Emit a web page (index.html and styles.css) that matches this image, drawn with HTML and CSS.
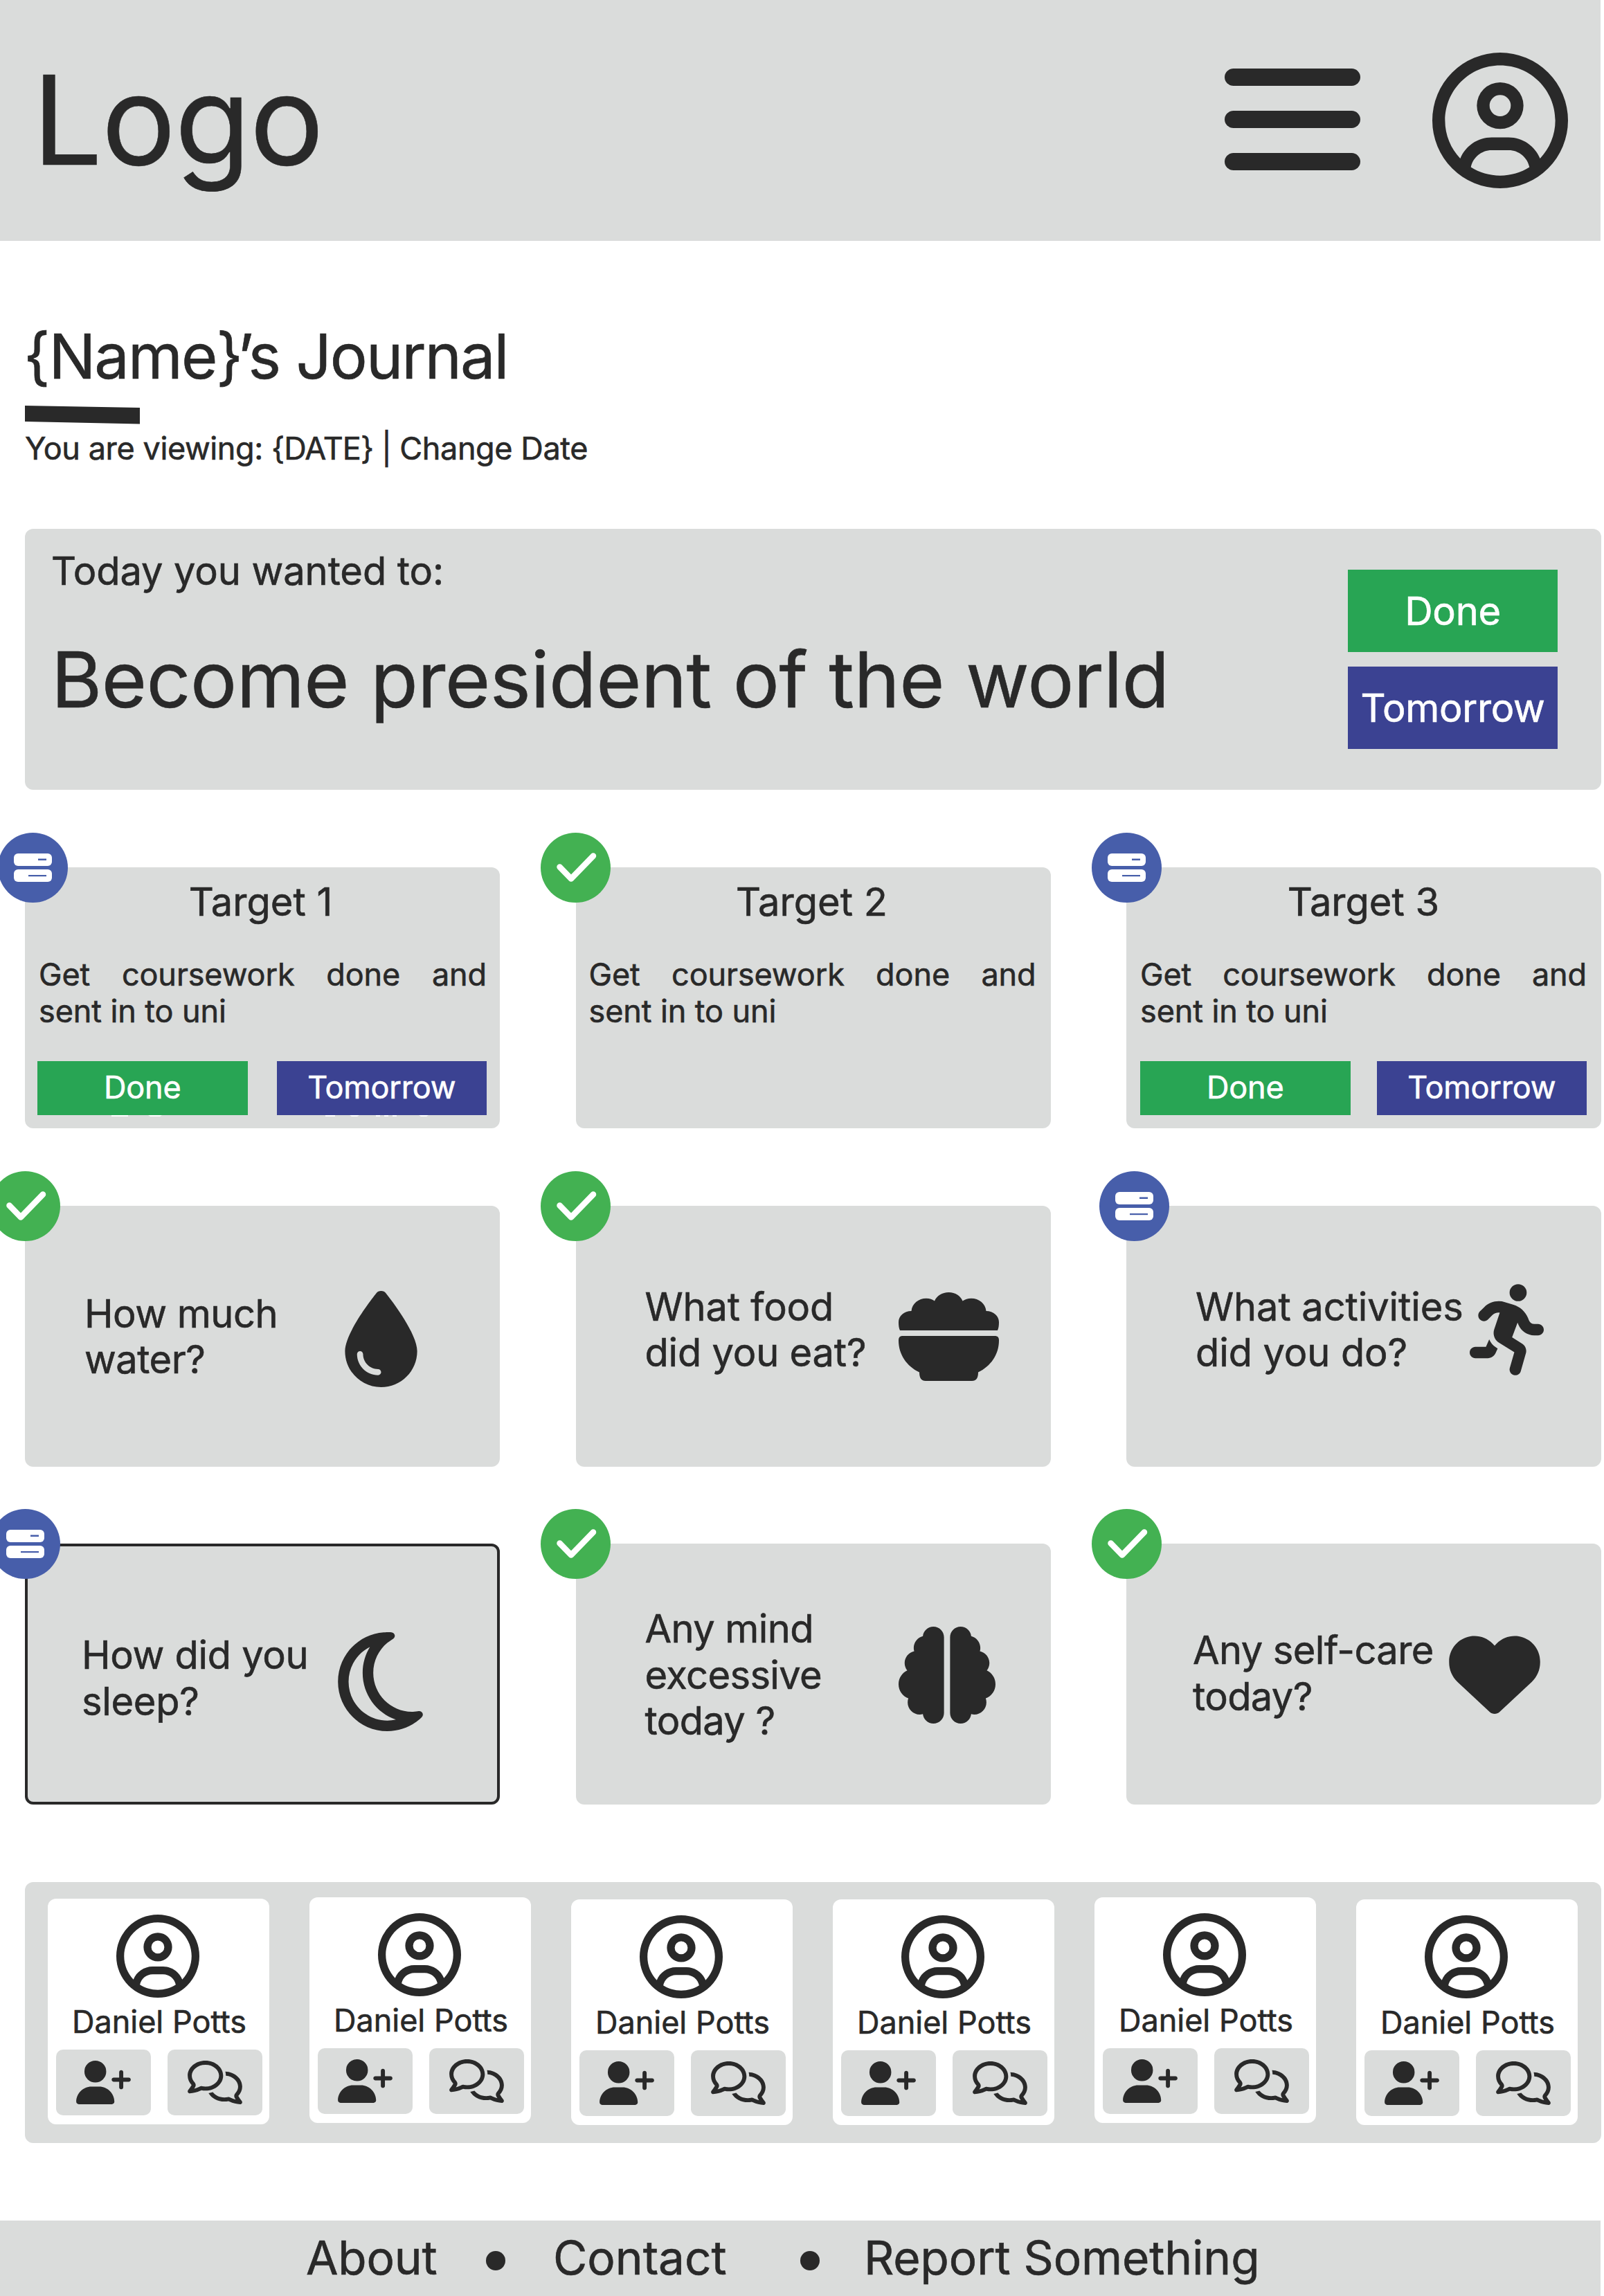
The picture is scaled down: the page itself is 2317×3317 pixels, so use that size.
FILE: index.html
```html
<!DOCTYPE html>
<html lang="en">
<head>
<meta charset="utf-8">
<title>Journal</title>
<link rel="stylesheet" href="styles.css">
</head>
<body>
<svg class="sprite" aria-hidden="true">
  <symbol id="i-user" viewBox="0 0 512 512"><path d="M406.5 399.6C387.4 352.9 341.5 320 288 320H224c-53.5 0-99.4 32.9-118.5 79.6C69.9 362.2 48 311.7 48 256C48 141.1 141.1 48 256 48s208 93.1 208 208c0 55.7-21.9 106.2-57.5 143.6zm-40.1 32.7C334.4 452.4 296.6 464 256 464s-78.4-11.6-110.5-31.7c7.3-36.7 39.7-64.3 78.5-64.3h64c38.8 0 71.2 27.6 78.5 64.3zM256 512A256 256 0 1 0 256 0a256 256 0 1 0 0 512zm0-272a40 40 0 1 1 0-80 40 40 0 1 1 0 80zm-88-40a88 88 0 1 0 176 0 88 88 0 1 0 -176 0z"/></symbol>
  <symbol id="i-later" viewBox="0 0 101 101"><rect x="23" y="30" width="55" height="18" rx="6" fill="#fff"/><rect x="23" y="53" width="55" height="18" rx="6" fill="#fff"/><rect x="58" y="37.5" width="12" height="2.5" fill="#475eaa"/><rect x="44" y="61" width="26" height="2.2" fill="#475eaa"/></symbol>
  <symbol id="i-check" viewBox="0 0 101 101"><path d="M27.5 49.5L44 66.5L76 33.5" fill="none" stroke="#fff" stroke-width="8.5" stroke-linecap="round" stroke-linejoin="round"/></symbol>
  <symbol id="i-drop" viewBox="0 0 384 512"><path d="M192 512C86 512 0 426 0 320C0 228.8 130.2 57.7 166.6 11.7C172.6 4.2 181.5 0 191.1 0h1.8c9.6 0 18.5 4.2 24.5 11.7C253.8 57.7 384 228.8 384 320c0 106-86 192-192 192zM96 336c0-8.8-7.2-16-16-16s-16 7.2-16 16c0 61.9 50.1 112 112 112c8.8 0 16-7.2 16-16s-7.2-16-16-16c-44.2 0-80-35.8-80-80z"/></symbol>
  <symbol id="i-bowl" viewBox="0 0 145 128"><path d="M2 55C0.500 52 0 48 0 43C0 34 8 27 18.500 27C19.500 16 29 8.700 40 8.700C45 8.700 49 10 52 12.500C55 5 63 0 72.500 0C82 0 89.500 5 92.500 12.500C96 10 100 8.700 105 8.700C116 8.700 125.500 16 126.500 27C137 27 145 34 145 43C145 48 144.500 52 143 55ZM6 63H139C143 63 145 65 145 69.500C145 90 133 107 115 115.500C115 124 112 128 106 128H39C33 128 30 124 30 115.500C12 107 0 90 0 69.500C0 65 2 63 6 63Z"/></symbol>
  <symbol id="i-run" viewBox="0 0 416 512"><path d="M320 48a48 48 0 1 0 -96 0 48 48 0 1 0 96 0zM125.700 175.500c9.900-9.900 23.400-15.500 37.500-15.500c1.900 0 3.800 .1 5.600 .3L137.600 254c-9.300 28 1.700 58.800 26.800 74.500l86.200 53.900-25.400 88.800c-4.900 17 5 34.700 22 39.600s34.700-5 39.600-22l28.700-100.400c5.900-20.600-2.600-42.600-20.700-53.900L238 299l30.900-82.400 5.100 12.300C289 264.700 323.900 288 362.700 288l21.300 0c17.700 0 32-14.300 32-32s-14.300-32-32-32l-21.300 0c-12.900 0-24.600-7.800-29.500-19.700l-6.300-15c-14.600-35.100-44.100-61.900-80.500-73.100l-48.700-15c-11.100-3.400-22.700-5.200-34.400-5.200c-31 0-60.800 12.300-82.700 34.300L57.400 153.400c-12.500 12.500-12.500 32.800 0 45.300s32.800 12.500 45.300 0l23.100-23.100zM91.200 352L32 352c-17.700 0-32 14.300-32 32s14.300 32 32 32l69.600 0c19 0 36.200-11.200 43.900-28.500L157 361.600l-9.500-6c-17.500-10.900-30.500-26.800-37.900-44.900L91.200 352z"/></symbol>
  <symbol id="i-moon" viewBox="0 32 384 448"><path d="M144.700 98.700c-21 34.100-33.100 74.300-33.100 117.300c0 98 62.800 181.400 150.400 211.700c-12.400 2.800-25.300 4.300-38.600 4.300C126.600 432 48 353.300 48 256c0-68.900 39.400-128.400 96.800-157.300zm62.100-66C91.100 41.200 0 137.900 0 256C0 379.700 100 480 223.500 480c47.800 0 92-15 128.400-40.600c1.900-1.300 3.700-2.700 5.500-4c4.800-3.600 9.400-7.400 13.900-11.400c2.700-2.400 5.300-4.800 7.900-7.300c5-4.900 6.300-12.500 3.100-18.700s-10.100-9.700-17-8.500c-3.700 .6-7.400 1.200-11.100 1.600c-5 .5-10.100 .9-15.300 1c-1.200 0-2.500 0-3.700 0l-.3 0c-96.800-.2-175.200-78.900-175.200-176c0-54.800 24.900-103.700 64.100-136c1-.9 2.100-1.700 3.200-2.600c4-3.200 8.200-6.200 12.500-9c3.100-2 6.300-4 9.600-5.800c6.100-3.500 9.200-10.500 7.700-17.300s-7.300-11.900-14.300-12.500c-3.600-.3-7.100-.5-10.700-.6c-2.700-.1-5.500-.1-8.200-.1c-3.300 0-6.500 .1-9.800 .2c-2.300 .1-4.600 .2-6.900 .4z"/></symbol>
  <symbol id="i-brain" viewBox="0 0 512 512"><path d="M184 0c30.900 0 56 25.100 56 56V456c0 30.900-25.100 56-56 56c-28.900 0-52.700-21.900-55.700-50.100c-5.200 1.400-10.700 2.100-16.300 2.100c-35.300 0-64-28.700-64-64c0-7.400 1.300-14.600 3.600-21.200C21.400 367.400 0 338.200 0 304c0-31.900 18.700-59.500 45.800-72.300C37.100 220.800 32 207 32 192c0-30.700 21.600-56.300 50.400-62.600C80.800 123.900 80 118 80 112c0-29.900 20.600-55.100 48.300-62.100C131.300 21.900 155.100 0 184 0zM328 0c28.900 0 52.600 21.900 55.700 49.900c27.800 7 48.300 32.100 48.300 62.100c0 6-.8 11.900-2.400 17.400c28.800 6.200 50.400 31.900 50.400 62.600c0 15-5.100 28.800-13.800 39.700C493.300 244.500 512 272.100 512 304c0 34.200-21.400 63.400-51.600 74.800c2.300 6.600 3.600 13.800 3.600 21.200c0 35.300-28.700 64-64 64c-5.600 0-11.100-.7-16.300-2.100c-3 28.200-26.800 50.100-55.700 50.100c-30.900 0-56-25.100-56-56V56c0-30.900 25.100-56 56-56z"/></symbol>
  <symbol id="i-heart" viewBox="0 40 512 440"><path d="M47.600 300.400L228.300 469.100c7.500 7 17.400 10.900 27.700 10.900s20.200-3.900 27.700-10.900L464.400 300.400c30.400-28.300 47.600-68 47.600-109.500v-5.800c0-69.900-50.500-129.500-119.400-141C347 36.500 300.600 51.400 268 84L256 96 244 84c-32.600-32.600-79-47.500-124.600-39.900C50.500 55.600 0 115.200 0 185.100v5.800c0 41.500 17.200 81.200 47.600 109.500z"/></symbol>
  <symbol id="i-add" viewBox="0 0 640 512"><path d="M96 128a128 128 0 1 1 256 0A128 128 0 1 1 96 128zM0 482.300C0 383.800 79.800 304 178.300 304h91.400C368.200 304 448 383.800 448 482.300c0 16.400-13.300 29.700-29.700 29.700H29.700C13.300 512 0 498.700 0 482.300zM504 312V248H440c-13.300 0-24-10.700-24-24s10.700-24 24-24h64V136c0-13.300 10.700-24 24-24s24 10.700 24 24v64h64c13.300 0 24 10.700 24 24s-10.700 24-24 24H552v64c0 13.300-10.700 24-24 24s-24-10.700-24-24z"/></symbol>
  <symbol id="i-chat" viewBox="0 0 640 512"><path d="M88.200 309.100c9.800-18.300 6.800-40.800-7.500-55.800C59.400 230.900 48 204 48 176c0-63.500 63.800-128 160-128s160 64.500 160 128s-63.800 128-160 128c-13.100 0-25.800-1.300-37.800-3.600c-10.400-2-21.200-.6-30.700 4.200c-4.100 2.100-8.300 4.100-12.600 6c-16 7.200-32.900 13.500-49.900 18c2.800-4.600 5.400-9.100 7.900-13.600c1.100-1.900 2.200-3.900 3.200-5.900zM208 352c114.900 0 208-78.800 208-176S322.900 0 208 0S0 78.800 0 176c0 41.800 17.200 80.100 45.900 110.300c-.9 1.700-1.900 3.500-2.800 5.100c-10.300 18.400-22.300 36.500-36.600 52.100c-6.600 7-8.300 17.200-4.600 25.900C5.800 378.300 14.400 384 24 384c43 0 86.500-13.300 122.700-29.700c4.800-2.200 9.600-4.500 14.200-6.800c15.100 3 30.900 4.500 47.100 4.500zM432 480c16.200 0 31.900-1.600 47.100-4.500c4.600 2.300 9.400 4.600 14.200 6.800C529.500 498.700 573 512 616 512c9.600 0 18.200-5.700 22-14.500c3.800-8.800 2-19-4.600-25.900c-14.200-15.600-26.200-33.700-36.600-52.100c-.9-1.700-1.900-3.400-2.800-5.100C622.800 384.100 640 345.800 640 304c0-94.400-87.900-171.500-198.200-175.800c4.100 15.200 6.200 31.200 6.200 47.800l0 .6c87.200 6.700 144 67.500 144 127.400c0 28-11.400 54.900-32.700 77.200c-14.300 15-17.300 37.600-7.500 55.800c1.100 2 2.200 4 3.200 5.900c2.500 4.500 5.200 9 7.900 13.600c-17-4.500-33.900-10.700-49.900-18c-4.300-1.900-8.500-3.900-12.600-6c-9.500-4.800-20.300-6.200-30.700-4.200c-12.100 2.400-24.800 3.600-37.800 3.600c-61.700 0-110-26.500-136.800-62.300c-16 5.400-32.800 9.400-50 11.800C279 439.800 350 480 432 480z"/></symbol>
</svg>

<header class="header">
  <div class="logo">Logo</div>
  <div class="menu"><span></span><span></span><span></span></div>
  <svg class="account"><use href="#i-user"/></svg>
</header>

<main class="main">
  <h1 class="title">{Name<span class="tight">}’</span>s Journal</h1>
  <svg class="accent" viewBox="0 0 166 27"><path d="M0 0L166 3V26.500L0 23Z"/></svg>
  <p class="viewing">You are viewing: <span class="date">{DATE} |</span> Change Date</p>

  <section class="goal">
    <div class="goal-text">
      <p class="goal-label">Today you wanted to:</p>
      <p class="goal-name">Become president of the world</p>
    </div>
    <div class="goal-actions">
      <div class="btn btn-done">Done</div>
      <div class="btn btn-later">Tomorrow</div>
    </div>
  </section>

  <section class="grid">
    <article class="card target first">
      <svg class="badge later shift"><use href="#i-later"/></svg>
      <h2>Target 1</h2>
      <p><span class="full">Get coursework done and</span><span>sent in to uni</span></p>
      <div class="actions"><div class="btn btn-done">Done</div><div class="btn btn-later">Tomorrow</div></div>
      <svg class="edge" viewBox="0 0 460 2"><path d="M0 0H24V2H0ZM53 0H73L70 2H56ZM309 0H323V2H309ZM344 0H358L355 2H347ZM382 0H388V2H382ZM394 0H400V2H394ZM406 0H412V2H406ZM444 0H458L455 2H447Z"/></svg>
    </article>
    <article class="card target second">
      <svg class="badge done"><use href="#i-check"/></svg>
      <h2>Target 2</h2>
      <p><span class="full">Get coursework done and</span><span>sent in to uni</span></p>
    </article>
    <article class="card target third">
      <svg class="badge later"><use href="#i-later"/></svg>
      <h2>Target 3</h2>
      <p><span class="full">Get coursework done and</span><span>sent in to uni</span></p>
      <div class="actions"><div class="btn btn-done">Done</div><div class="btn btn-later">Tomorrow</div></div>
    </article>

    <article class="card ask water">
      <svg class="badge done"><use href="#i-check"/></svg>
      <p>How much<br>water?</p><svg class="icon"><use href="#i-drop"/></svg>
    </article>
    <article class="card ask food">
      <svg class="badge done"><use href="#i-check"/></svg>
      <p>What food<br>did you eat?</p><svg class="icon"><use href="#i-bowl"/></svg>
    </article>
    <article class="card ask activity">
      <svg class="badge later shift"><use href="#i-later"/></svg>
      <p>What activities<br>did you do?</p><svg class="icon"><use href="#i-run"/></svg>
    </article>

    <article class="card ask sleep">
      <svg class="badge later"><use href="#i-later"/></svg>
      <p>How did you<br>sleep?</p><svg class="icon"><use href="#i-moon"/></svg>
    </article>
    <article class="card ask mind">
      <svg class="badge done"><use href="#i-check"/></svg>
      <p>Any mind<br>excessive<br>today ?</p><svg class="icon"><use href="#i-brain"/></svg>
    </article>
    <article class="card ask care">
      <svg class="badge done"><use href="#i-check"/></svg>
      <p>Any self-care<br>today?</p><svg class="icon"><use href="#i-heart"/></svg>
    </article>
  </section>

  <section class="friends">
    <article class="friend"><svg class="avatar"><use href="#i-user"/></svg><p>Daniel Potts</p><div class="tools"><span><svg><use href="#i-add"/></svg></span><span><svg><use href="#i-chat"/></svg></span></div></article>
    <article class="friend raised"><svg class="avatar"><use href="#i-user"/></svg><p>Daniel Potts</p><div class="tools"><span><svg><use href="#i-add"/></svg></span><span><svg><use href="#i-chat"/></svg></span></div></article>
    <article class="friend lowered"><svg class="avatar"><use href="#i-user"/></svg><p>Daniel Potts</p><div class="tools"><span><svg><use href="#i-add"/></svg></span><span><svg><use href="#i-chat"/></svg></span></div></article>
    <article class="friend lowered"><svg class="avatar"><use href="#i-user"/></svg><p>Daniel Potts</p><div class="tools"><span><svg><use href="#i-add"/></svg></span><span><svg><use href="#i-chat"/></svg></span></div></article>
    <article class="friend raised"><svg class="avatar"><use href="#i-user"/></svg><p>Daniel Potts</p><div class="tools"><span><svg><use href="#i-add"/></svg></span><span><svg><use href="#i-chat"/></svg></span></div></article>
    <article class="friend lowered"><svg class="avatar"><use href="#i-user"/></svg><p>Daniel Potts</p><div class="tools"><span><svg><use href="#i-add"/></svg></span><span><svg><use href="#i-chat"/></svg></span></div></article>
  </section>
</main>

<footer class="footer">
  <span class="about">About</span><i></i><span class="contact">Contact</span><i></i><span class="report">Report Something</span>
</footer>
</body>
</html>
```
FILE: styles.css
```css
* { box-sizing: border-box; margin: 0; padding: 0; }
body {
  width: 2317px;
  height: 3317px;
  overflow: hidden;
  background: #fff;
  color: #292929;
  font-family: Inter, "Liberation Sans", sans-serif;
  font-weight: 400;
  -webkit-text-stroke: 0.6px;
}
svg { display: block; fill: #292929; }
.sprite { position: absolute; width: 0; height: 0; }

.header {
  display: flex;
  align-items: flex-start;
  width: 2312px;
  height: 348px;
  padding: 65px 47px 0;
  background: #dadcdb;
}
.logo { font-size: 178.600px; line-height: 216px; letter-spacing: -1.300px; margin-right: auto; }
.menu { display: flex; flex-direction: column; gap: 36px; width: 196px; margin: 34px 104px 0 0; }
.menu span { height: 25px; border-radius: 13px; background: #292929; }
.account { width: 196px; height: 198px; margin-top: 10px; }

.main { width: 2313px; padding-left: 36px; }
.title { margin: 113px 0 0 -2px; font-size: 90px; line-height: 108px; font-weight: 400; letter-spacing: -1.900px; }
.tight { letter-spacing: -8px; }
.accent { width: 166px; height: 27px; margin-top: 17px; }
.viewing { margin-top: 8px; font-size: 45px; line-height: 54px; letter-spacing: -0.400px; }
.date { letter-spacing: -0.900px; }

.goal {
  display: flex;
  justify-content: space-between;
  height: 377px;
  margin-top: 89px;
  padding: 27px 63px 0 38px;
  border-radius: 12px;
  background: #dadcdb;
}
.goal-label { font-size: 56px; line-height: 68px; letter-spacing: -0.080px; }
.goal-name { margin-top: 54px; font-size: 112px; line-height: 136px; letter-spacing: -0.500px; white-space: nowrap; }
.goal-actions { display: flex; flex-direction: column; gap: 21px; width: 303px; padding-top: 32px; }
.goal-actions .btn { height: 119px; font-size: 56px; letter-spacing: -0.300px; }
.btn { display: flex; align-items: center; justify-content: center; color: #fff; }
.btn-done { background: #28a554; }
.btn-later { background: #3b4292; }

.grid {
  display: grid;
  grid-template-columns: repeat(3, 686px);
  column-gap: 109.500px;
  row-gap: 111.500px;
  margin-top: 112px;
}
.card { position: relative; height: 377px; border-radius: 12px; background: #dadcdb; }
.badge { position: absolute; left: -50.500px; top: -50px; width: 101px; height: 101px; border-radius: 50%; }
.badge.shift { left: -39px; }
.badge.done { background: #43b152; }
.badge.later { background: #475eaa; }

.target { padding: 16px 19px 0 18px; }
.target.second { padding: 16px 21px 0 17px; }
.target.third { padding: 16px 21px 0 20px; }
.target h2 { font-size: 56px; line-height: 68px; font-weight: 400; text-align: center; }
.first h2 { margin-left: -4px; }
.target p { margin: 45px 0 0 2px; font-size: 45px; line-height: 52.700px; letter-spacing: -0.100px; }
.third p { margin-left: 0; }
.target p span { display: block; }
.target .full { text-align-last: justify; }
.actions { display: flex; justify-content: space-between; margin-top: 46px; }
.actions .btn { width: 303.500px; height: 78px; padding-bottom: 3px; font-size: 45px; letter-spacing: -0.200px; }
.edge { position: absolute; left: 125px; top: 358px; width: 460px; height: 2px; fill: #fff; }

.ask { display: flex; align-items: flex-start; }
.ask p { font-size: 56px; line-height: 66.500px; white-space: nowrap; }
.water p { width: 376px; margin: 123px 0 0 86px; letter-spacing: -0.500px; }
.water .icon { width: 105px; height: 139px; margin-top: 123px; }
.food p { width: 366px; margin: 113px 0 0 100px; letter-spacing: -0.200px; }
.food .icon { width: 145px; height: 128px; margin-top: 125px; }
.activity p { width: 396px; margin: 113px 0 0 100px; letter-spacing: -0.100px; }
.activity .icon { width: 107px; height: 132px; margin-top: 113px; }
.sleep { box-shadow: inset 0 0 0 4px #292929; }
.sleep p { width: 370px; margin: 128px 0 0 82px; letter-spacing: -0.300px; }
.sleep .icon { width: 123px; height: 143px; margin-top: 128px; }
.mind p { width: 366px; margin: 90px 0 0 100px; letter-spacing: -0.600px; }
.mind .icon { width: 140px; height: 140px; margin-top: 120px; }
.care p { width: 370px; margin: 121px 0 0 96px; letter-spacing: -0.600px; }
.care .icon { width: 132px; height: 113px; margin-top: 133px; }

.friends {
  display: flex;
  gap: 58px;
  height: 377px;
  margin-top: 112px;
  padding: 24px 0 0 33px;
  border-radius: 12px;
  background: #dadcdb;
}
.friend { width: 320px; height: 326px; padding: 23px 10px 0 12px; border-radius: 12px; background: #fff; }
.friend.raised { margin-top: -2px; }
.friend.lowered { margin-top: 1px; }
.avatar { width: 120px; height: 120px; margin: 0 auto 0 87px; }
.friend p { margin-top: 8px; font-size: 45px; line-height: 54px; text-align: center; white-space: nowrap; }
.tools { display: flex; justify-content: space-between; margin-top: 13px; }
.tools span { display: flex; align-items: center; justify-content: center; width: 137px; height: 95px; border-radius: 10px; background: #dadcdb; }
.tools svg { width: 79px; height: 63px; }

.footer {
  display: flex;
  width: 2312px;
  height: 109px;
  margin-top: 112px;
  padding: 13px 0 0 442px;
  background: #dadcdb;
  font-size: 67.500px;
  line-height: 82px;
  white-space: nowrap;
}
.footer i { width: 28px; height: 28px; margin-top: 31px; border-radius: 50%; background: #292929; }
.about { width: 260px; letter-spacing: -0.200px; }
.contact { width: 357px; margin-left: 69px; }
.report { margin-left: 64px; letter-spacing: -0.100px; }
```
